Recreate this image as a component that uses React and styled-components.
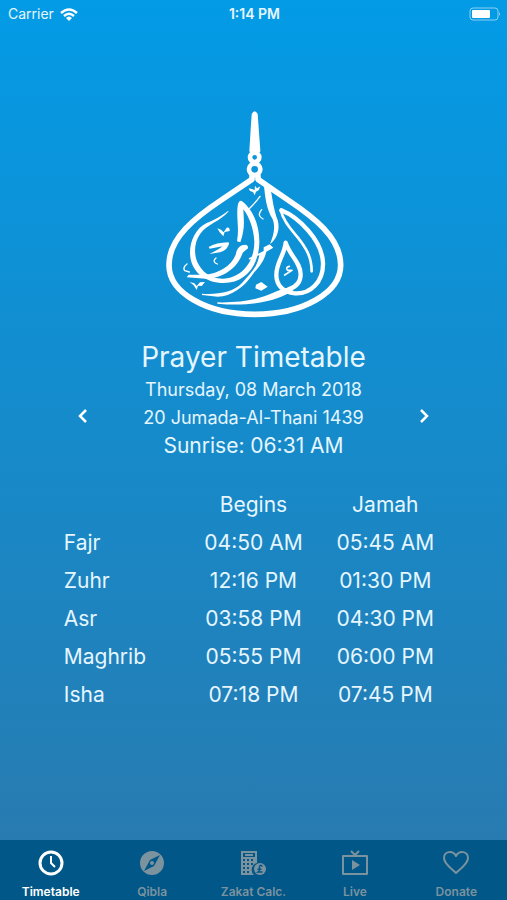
import React from "react";
import styled, { createGlobalStyle } from "styled-components";

const GlobalStyle = createGlobalStyle`
  *, *::before, *::after { box-sizing: border-box; }
  body { margin: 0; font-family: Inter, "Liberation Sans", sans-serif; }
`;

const Screen = styled.div`
  display: flex;
  flex-direction: column;
  min-height: 100vh;
  color: #e6f6ff;
  background: linear-gradient(#039be6, #287bb0 94%);
`;

const StatusBar = styled.header`
  display: grid;
  grid-template-columns: 1fr auto 1fr;
  align-items: center;
  height: 28px;
  padding: 0 6px 0 8px;
  font-size: 14px;
  line-height: 20px;
`;

const Carrier = styled.div`
  display: flex;
  align-items: center;
  gap: 6px;
`;

const Clock = styled.time`
  font-weight: 600;
`;

const BatteryIcon = styled.svg`
  justify-self: end;
`;

const Main = styled.main`
  flex: 1;
  display: flex;
  flex-direction: column;
  align-items: center;
  padding-top: 82px;
`;

const Title = styled.h1`
  margin: 18px 0 0;
  font-size: 28px;
  line-height: 38px;
  font-weight: 400;
`;

const DayPicker = styled.section`
  display: flex;
  align-items: center;
  justify-content: space-between;
  width: 78%;
`;

const ArrowButton = styled.button`
  display: flex;
  align-items: center;
  justify-content: center;
  width: 54px;
  height: 44px;
  padding: 0 0 4px;
  border: 0;
  background: none;
  color: #fff;
  cursor: pointer;
`;

const DayLines = styled.div`
  text-align: center;
`;

const DayLine = styled.p`
  margin: 0;
  font-size: ${(p) => (p.$large ? 21 : 18)}px;
  line-height: 28px;
`;

const Timetable = styled.table`
  width: 78%;
  margin-top: 26px;
  table-layout: fixed;
  border-collapse: collapse;
  font-size: 21px;
  line-height: 38px;
`;

const Cell = styled.td`
  padding: 0;
  text-align: center;
  white-space: nowrap;
`;

const ColumnHead = styled(Cell).attrs({ as: "th", scope: "col" })`
  font-weight: 400;
`;

const PrayerName = styled(Cell).attrs({ as: "th", scope: "row" })`
  padding-left: 8px;
  font-weight: 400;
  text-align: left;
`;

const TabBar = styled.nav`
  display: grid;
  grid-template-columns: repeat(5, 1fr);
  height: 60px;
  background: #015787;
`;

const Tab = styled.a`
  display: flex;
  flex-direction: column;
  align-items: center;
  padding-top: 9px;
  gap: 7px;
  font-size: 12px;
  line-height: 16px;
  font-weight: 600;
  text-decoration: none;
  white-space: nowrap;
  color: ${(p) => (p.$active ? "#fff" : "#7b929f")};
`;

const TabIcon = styled.svg.attrs({ viewBox: "0 0 28 28", "aria-hidden": true })`
  width: 28px;
  height: 28px;
  fill: none;
  stroke: currentColor;
  stroke-width: 2;
`;

const LogoDrawing = styled.svg`
  width: 180px;
  height: 210px;
  fill: none;
  stroke: #fff;
  stroke-linecap: round;
  stroke-linejoin: round;
`;

function Logo() {
  return (
    <LogoDrawing viewBox="28 -270 540 630" role="img" aria-label="Mosque logo">
      <path d="M291-258Q300-275 309-258L317-148Q317-142 308-142H291Q284-142 284-148Z" fill="#fff" stroke="none" />
      <circle cx="300" cy="-128" r="14" strokeWidth="14" />
      <circle cx="300" cy="-92" r="17" strokeWidth="14" />
      <path
        d="M292-70V-62L200 0C125 50 43 112 43 195C43 278 155 343 300 343S558 278 558 195C558 112 475 50 400 0L310-62V-70"
        strokeWidth="17"
      />
      <g fill="#fff" stroke="none">
        <path d="M222 34C198 64 158 72 137 101C116 130 119 166 128 186C142 217 169 237 205 236C261 234 299 186 299 126C298 89 284 51 266 28C268 65 271 88 257 127L247 124C255 82 243 47 250 12Q255-4 265 6C297 32 315 80 314 128C312 198 272 249 207 249C154 249 106 217 106 157C106 122 124 84 156 69Q188 57 220 33Z" />
        <path d="M262 136Q281 130 280 145L264 158C251 202 205 236 154 236L96 232L102 224L151 224C192 220 230 198 243 164Q247 141 262 136Z" />
        <path d="M327-50C332-8 334 26 354 58C363 82 357 106 346 132C367 117 377 88 369 60C356 27 353-10 347-37Z" />
        <path d="M188 307Q272 309 329 289C363 276 384 265 407 262L416 271C375 300 300 321 188 311Z" />
        <path d="M327 142L345 133L356 143L335 155C327 190 307 206 295 222C270 260 230 290 189 290L142 285V281C190 284 236 277 262 249C287 220 307 205 314 165L284 179L282 175L327 153Z" />
        <path d="M304 254L320 246L339 260L320 272L302 265Z" />
        <path d="M162 141Q184 128 221 127Q226 130 219 140Q214 151 196 157L164 162Q193 149 203 139L165 146Z" />
        <path d="M188 85L199 89L207 97L216 83Q226 80 225 93L210 96L206 109L195 97Z" />
        <path d="M105 246L119 250L126 258L136 247L151 246L141 258L130 257L126 270L117 256Z" />
        <path d="M282-35L291-33L300-30L301-43L307-35L317-41L312-29L304-25L300-14L295-24L286-27Z" />
      </g>
      <path d="M380 31C432 52 502 120 505 188C507 247 465 283 421 280C384 278 365 254 365 225C365 186 389 166 393 128C405 166 438 188 438 223C438 246 425 261 402 268" strokeWidth="13" />
      <path d="M379 33C389 77 431 106 452 145Q471 175 471 214" strokeWidth="8" />
      <path d="M184 174Q171 185 188 192M97 192Q83 202 90 212L104 216M321 29Q305 47 325 57M316-11Q303 7 285 25" strokeWidth="4" />
      <path d="M404 199Q391 202 399 211L412 211L390 225" strokeWidth="5" />
    </LogoDrawing>
  );
}

function ClockIcon() {
  return (
    <TabIcon>
      <circle cx="14" cy="14" r="11" strokeWidth="3" />
      <path d="M14 7V14L18 18" />
    </TabIcon>
  );
}

function CompassIcon() {
  return (
    <TabIcon>
      <path
        fill="currentColor"
        fillRule="evenodd"
        stroke="none"
        d="M14 2a12 12 0 1 0 0 24 12 12 0 0 0 0-24ZM22 6L16 17L6 22L12 11ZM14 12A2 2 0 1 1 14 16 2 2 0 0 1 14 12Z"
      />
    </TabIcon>
  );
}

function CalculatorIcon() {
  return (
    <TabIcon>
      <path
        fill="currentColor"
        fillRule="evenodd"
        stroke="none"
        d="M2 2H18V14A7 7 0 0 0 15 26H2ZM4 4V8H16V4ZM4 10V12H6V10ZM8 10V12H10V10ZM12 10V12H14V10ZM4 14V16H6V14ZM8 14V16H10V14ZM12 14V16H14V14ZM4 18V20H6V18ZM8 18V20H10V18ZM4 22V24H6V22ZM8 22V24H10V22Z"
      />
      <path d="M6 6H14" strokeWidth="2" />
      <circle cx="21" cy="20" r="6" fill="currentColor" stroke="none" />
      <path
        stroke="#015787"
        strokeWidth="1.5"
        d="M23.5 17.5Q20.5 15 20.5 18V21Q20.5 22 19 23H23.5M18.5 20.2H22.5"
      />
    </TabIcon>
  );
}

function LiveIcon() {
  return (
    <TabIcon>
      <path d="M2 7H26V25H2Z" strokeLinejoin="round" />
      <path d="M10 2L14 6L18 2" />
      <path d="M11 11L19 16L11 21Z" fill="currentColor" stroke="none" />
    </TabIcon>
  );
}

function HeartIcon() {
  return (
    <TabIcon>
      <path
        strokeLinejoin="round"
        d="M14 24C10 20 2 15 2 9C2 2 11 1 14 7C17 1 26 2 26 9C26 15 18 20 14 24Z"
      />
    </TabIcon>
  );
}

const prayers = [
  ["Fajr", "04:50 AM", "05:45 AM"],
  ["Zuhr", "12:16 PM", "01:30 PM"],
  ["Asr", "03:58 PM", "04:30 PM"],
  ["Maghrib", "05:55 PM", "06:00 PM"],
  ["Isha", "07:18 PM", "07:45 PM"],
];

const tabs = [
  { label: "Timetable", href: "#timetable", Icon: ClockIcon },
  { label: "Qibla", href: "#qibla", Icon: CompassIcon },
  { label: "Zakat Calc.", href: "#zakat", Icon: CalculatorIcon },
  { label: "Live", href: "#live", Icon: LiveIcon },
  { label: "Donate", href: "#donate", Icon: HeartIcon },
];

function Chevron({ d }) {
  return (
    <svg width="10" height="16" viewBox="0 0 10 16" fill="none" stroke="currentColor" strokeWidth="2.5" aria-hidden="true">
      <path d={d} />
    </svg>
  );
}

export default function App() {
  return (
    <Screen>
      <GlobalStyle />
      <StatusBar>
        <Carrier>
          Carrier
          <svg width="18" height="13" viewBox="0 0 18 13" fill="none" stroke="#fff" strokeWidth="2.4" aria-hidden="true">
            <path d="M1 5Q9-2 17 5M4 8Q9 3.5 14 8" />
            <path d="M6 10Q9 7 12 10L9 13Z" fill="#fff" stroke="none" />
          </svg>
        </Carrier>
        <Clock>1:14 PM</Clock>
        <BatteryIcon width="32" height="14" viewBox="0 0 32 14" aria-label="Battery" role="img">
          <rect x="1" y="1" width="28" height="12" rx="3" fill="none" stroke="#8bd0f5" />
          <rect x="3" y="3" width="18" height="8" rx="1" fill="#fff" />
          <path d="M30 5Q32 7 30 9Z" fill="#8bd0f5" />
        </BatteryIcon>
      </StatusBar>
      <Main>
        <Logo />
        <Title>Prayer Timetable</Title>
        <DayPicker>
          <ArrowButton type="button" aria-label="Previous day">
            <Chevron d="M8 2L2 8L8 14" />
          </ArrowButton>
          <DayLines>
            <DayLine>Thursday, 08 March 2018</DayLine>
            <DayLine>20 Jumada-Al-Thani 1439</DayLine>
            <DayLine $large>Sunrise: 06:31 AM</DayLine>
          </DayLines>
          <ArrowButton type="button" aria-label="Next day">
            <Chevron d="M2 2L8 8L2 14" />
          </ArrowButton>
        </DayPicker>
        <Timetable>
          <thead>
            <tr>
              <Cell />
              <ColumnHead>Begins</ColumnHead>
              <ColumnHead>Jamah</ColumnHead>
            </tr>
          </thead>
          <tbody>
            {prayers.map(([name, begins, jamah]) => (
              <tr key={name}>
                <PrayerName>{name}</PrayerName>
                <Cell>{begins}</Cell>
                <Cell>{jamah}</Cell>
              </tr>
            ))}
          </tbody>
        </Timetable>
      </Main>
      <TabBar>
        {tabs.map(({ label, href, Icon }, i) => (
          <Tab key={label} href={href} $active={i === 0} aria-current={i === 0 ? "page" : undefined}>
            <Icon />
            {label}
          </Tab>
        ))}
      </TabBar>
    </Screen>
  );
}
